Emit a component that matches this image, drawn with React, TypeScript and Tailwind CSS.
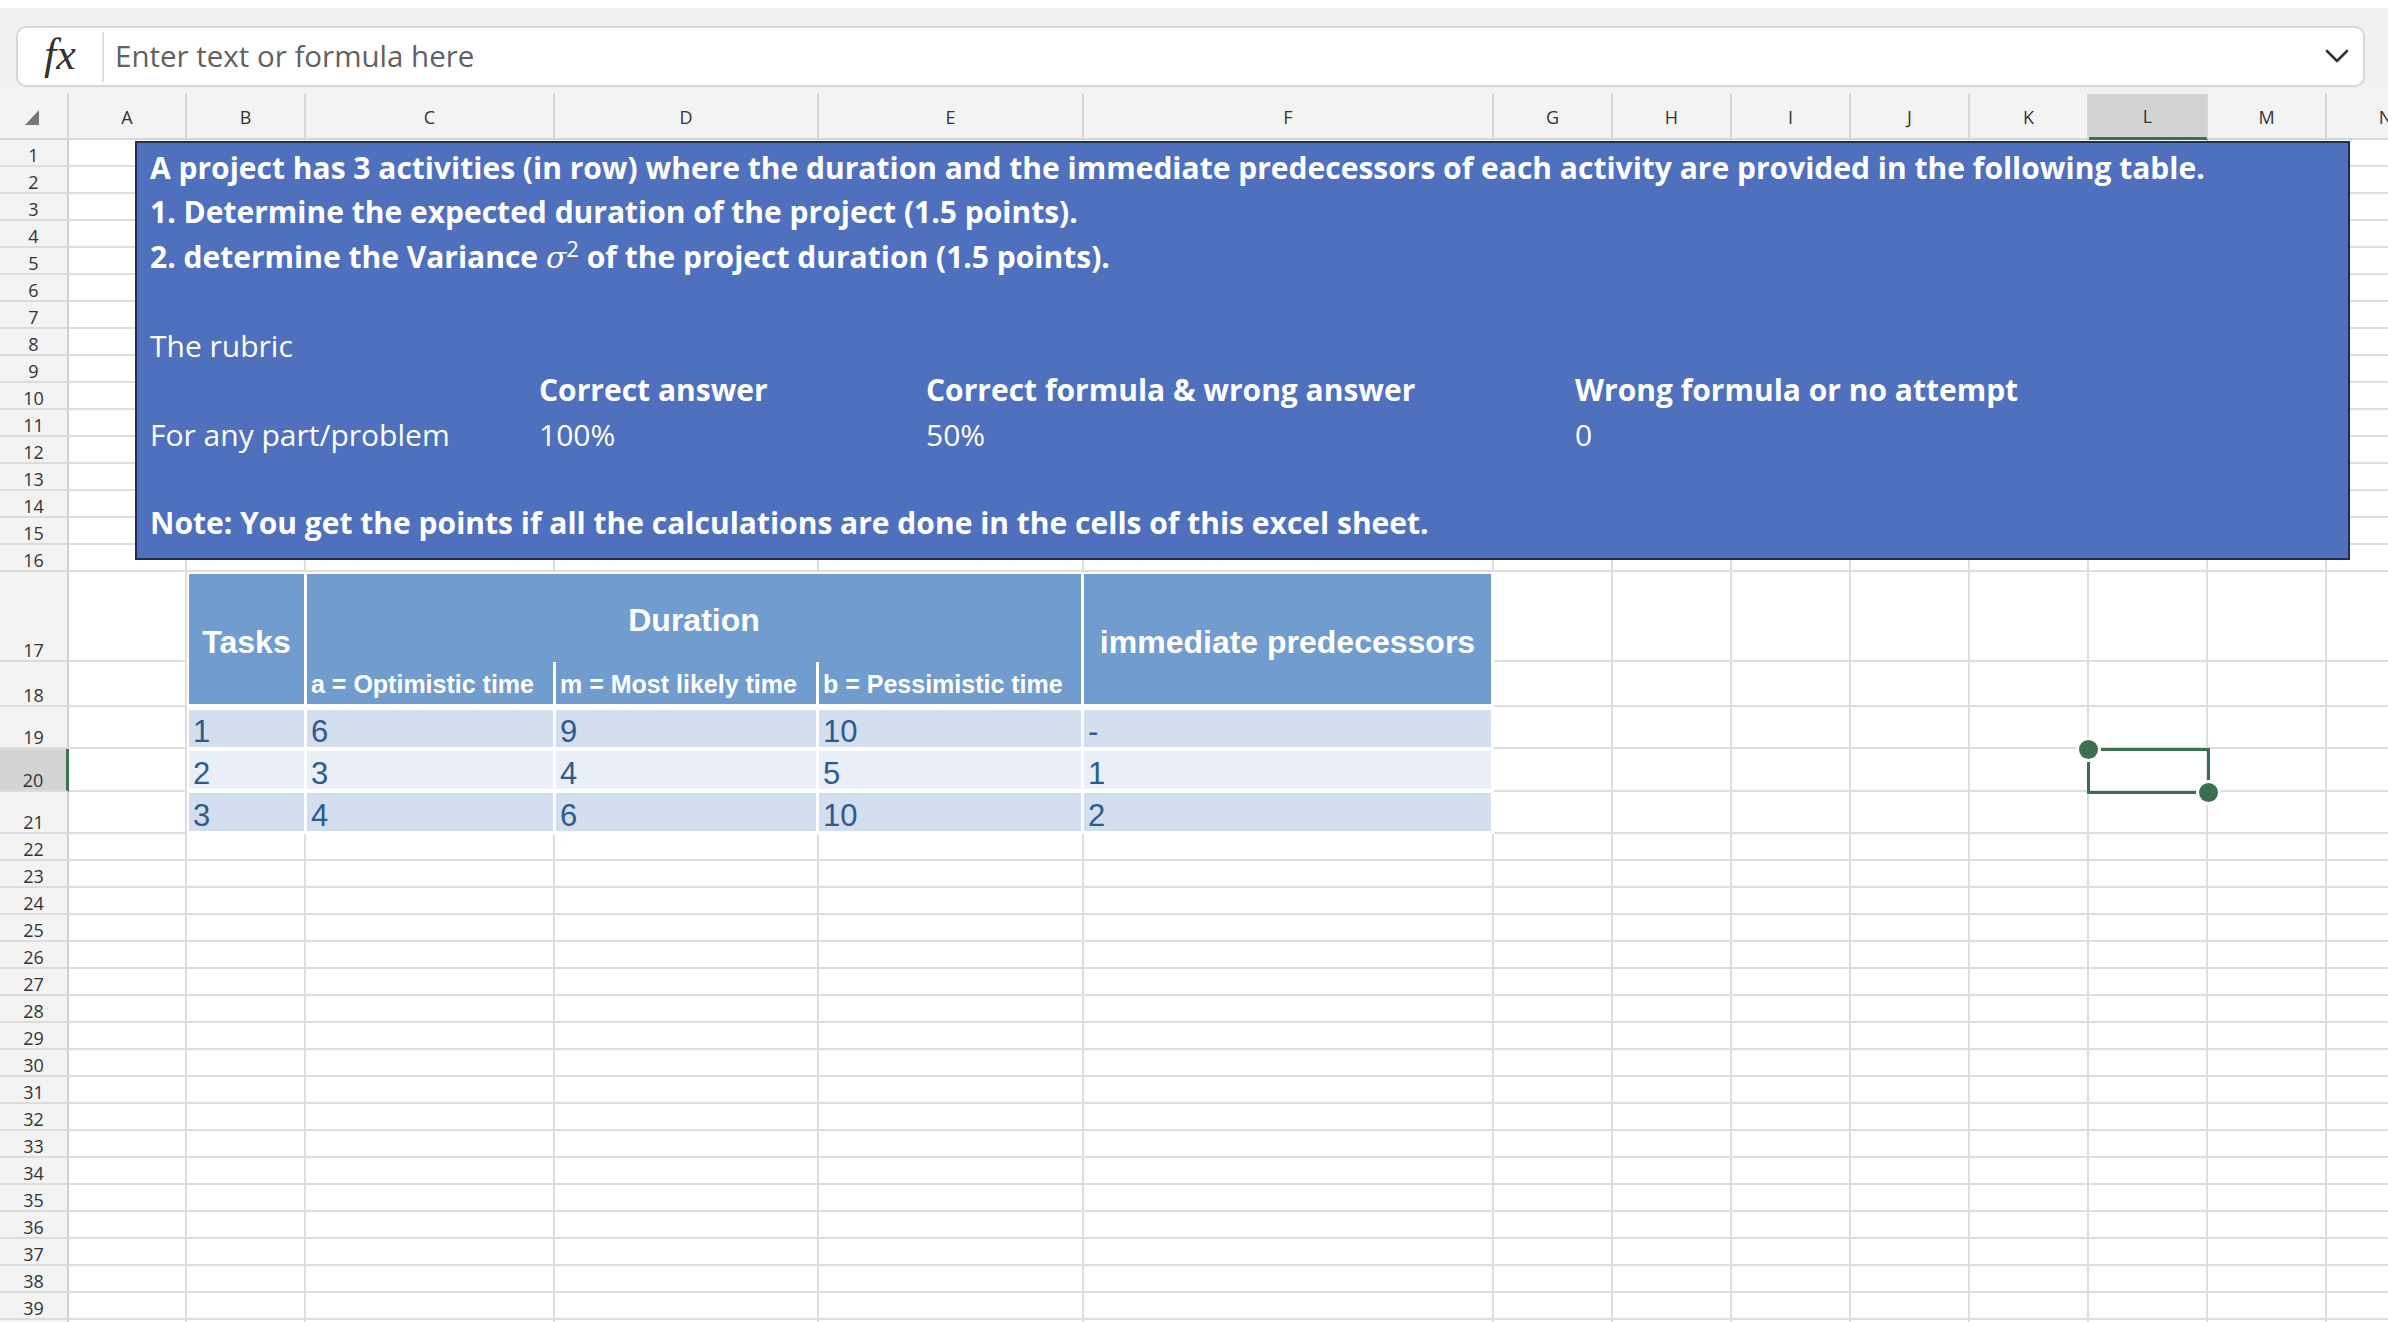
import React from "react";

type Col = { label: string; w: string };

const COLS: Col[] = [
  { label: "A", w: "w-[118px]" },
  { label: "B", w: "w-[119px]" },
  { label: "C", w: "w-[249px]" },
  { label: "D", w: "w-[264px]" },
  { label: "E", w: "w-[265px]" },
  { label: "F", w: "w-[410px]" },
  { label: "G", w: "w-[119px]" },
  { label: "H", w: "w-[119px]" },
  { label: "I", w: "w-[119px]" },
  { label: "J", w: "w-[119px]" },
  { label: "K", w: "w-[119px]" },
  { label: "L", w: "w-[119px]" },
  { label: "M", w: "w-[119px]" },
  { label: "N", w: "w-[119px]" },
];

type RowDef = { n: number; h: string; selected?: boolean };

const TOP_ROWS: RowDef[] = Array.from({ length: 16 }, (_, i) => ({ n: i + 1, h: "h-[27px]" }));
const TABLE_ROWS: RowDef[] = [
  { n: 17, h: "h-[90px]" },
  { n: 18, h: "h-[45px]" },
  { n: 19, h: "h-[42px]" },
  { n: 20, h: "h-[43px]", selected: true },
  { n: 21, h: "h-[42px]" },
];
const BOTTOM_ROWS: RowDef[] = Array.from({ length: 19 }, (_, i) => ({ n: i + 22, h: "h-[27px]" }));

const TASKS = [
  { id: "1", a: "6", m: "9", b: "10", pred: "-", bg: "bg-[#d3deef]" },
  { id: "2", a: "3", m: "4", b: "5", pred: "1", bg: "bg-[#e9eef7]" },
  { id: "3", a: "4", m: "6", b: "10", pred: "2", bg: "bg-[#d3deef]" },
];

function Cell({ w }: { w: string }) {
  return <div className={`${w} shrink-0 h-full border-r-2 border-b-2 border-[#dddddd]`} />;
}

function RowHead({ row }: { row: RowDef }) {
  return (
    <div
      className={`w-[69px] shrink-0 h-full flex items-end justify-center border-b-2 border-b-[#dcdcdc] text-[18px] leading-[20px] text-[#333333] ${
        row.selected
          ? "bg-[#d4d4d4] border-r-[3px] border-r-[#3a7050]"
          : "bg-[#f3f3f3] border-r-2 border-r-[#d0d0d0]"
      }`}
    >
      {row.n}
    </div>
  );
}

function GridRow({ row }: { row: RowDef }) {
  return (
    <div className={`flex ${row.h}`}>
      <RowHead row={row} />
      {COLS.map((c) => (
        <Cell key={c.label} w={c.w} />
      ))}
    </div>
  );
}

function FormulaBar() {
  return (
    <div className="h-[94px] bg-[#f1f1f1] border-t-[8px] border-white pt-[18px] pl-[16px] pr-[23px]">
      <div className="h-[61px] bg-white border-2 border-[#d7d7d7] rounded-[10px] flex items-center">
        <div className="w-[84px] flex justify-center font-['Liberation_Serif',serif] italic text-[44px] leading-none text-[#333333] pb-[4px]">
          fx
        </div>
        <div className="w-[2px] h-[50px] bg-[#dedede]" />
        <div className="flex-1 pl-[11px] text-[29.5px] text-[#616161]">Enter text or formula here</div>
        <svg width="24" height="15" viewBox="0 0 24 15" className="mr-[14px]">
          <polyline points="2,2 12,12 22,2" fill="none" stroke="#333333" strokeWidth="2.6" strokeLinecap="round" strokeLinejoin="round" />
        </svg>
      </div>
    </div>
  );
}

function ColumnHeaders() {
  return (
    <div className="flex h-[46px] bg-[#f3f3f3]">
      <div className="w-[69px] shrink-0 h-full border-r-2 border-b-2 border-[#d6d6d6] flex items-end justify-end pr-[28px] pb-[13px]">
        <svg width="14" height="15" viewBox="0 0 14 15">
          <polygon points="14,0 14,15 0,15" fill="#767676" />
        </svg>
      </div>
      {COLS.map((c) =>
        c.label === "L" ? (
          <div
            key={c.label}
            className={`${c.w} shrink-0 h-full bg-[#d3d3d3] border-r-2 border-r-[#d6d6d6] border-b-[3px] border-b-[#3a7050] flex items-center justify-center pt-[2px] text-[18px] text-[#333333]`}
          >
            {c.label}
          </div>
        ) : (
          <div
            key={c.label}
            className={`${c.w} shrink-0 h-full border-r-2 border-b-2 border-[#d6d6d6] flex items-center justify-center pt-[2px] text-[18px] text-[#333333]`}
          >
            {c.label}
          </div>
        )
      )}
    </div>
  );
}

function ActivityTable() {
  return (
    <div className="w-[1307px] h-[262px] shrink-0 bg-white pt-[2px] pl-[2px] flex flex-col font-['Liberation_Sans',Arial,sans-serif]">
      <div className="flex gap-[3px] h-[130px] text-white font-bold">
        <div className="w-[115px] bg-[#709dcd] flex items-center justify-center pt-[6px] text-[32px]">Tasks</div>
        <div className="w-[774px] bg-[#709dcd] flex flex-col">
          <div className="flex-1 flex items-center justify-center pt-[3px] text-[32px]">Duration</div>
          <div className="h-[42px] flex text-[25px] leading-normal">
            <div className="w-[246px] flex items-end pl-[4px] pb-[1px] whitespace-nowrap">a = Optimistic time</div>
            <div className="w-[263px] flex items-end pl-[4px] pb-[1px] border-l-[3px] border-white whitespace-nowrap">
              m = Most likely time
            </div>
            <div className="w-[265px] flex items-end pl-[4px] pb-[1px] border-l-[3px] border-white whitespace-nowrap">
              b = Pessimistic time
            </div>
          </div>
        </div>
        <div className="w-[407px] bg-[#709dcd] flex items-center justify-center pt-[6px] text-[32px]">
          immediate predecessors
        </div>
      </div>
      <div className="flex flex-col gap-[4px] mt-[6px] text-[31px] leading-[31px] text-[#2d5b8b]">
        {TASKS.map((t, i) => (
          <div key={t.id} className={`flex gap-[3px] ${i === 0 ? "h-[37px]" : "h-[38px]"}`}>
            <div className={`w-[115px] ${t.bg} flex items-end pl-[4px]`}>{t.id}</div>
            <div className={`w-[246px] ${t.bg} flex items-end pl-[4px]`}>{t.a}</div>
            <div className={`w-[260px] ${t.bg} flex items-end pl-[4px]`}>{t.m}</div>
            <div className={`w-[262px] ${t.bg} flex items-end pl-[4px]`}>{t.b}</div>
            <div className={`w-[407px] ${t.bg} flex items-end pl-[4px]`}>{t.pred}</div>
          </div>
        ))}
      </div>
    </div>
  );
}

function TableBand() {
  return (
    <div className="flex">
      <div className="flex flex-col">
        {TABLE_ROWS.map((r) => (
          <div key={r.n} className={`flex ${r.h}`}>
            <RowHead row={r} />
            <Cell w="w-[118px]" />
          </div>
        ))}
      </div>
      <ActivityTable />
      <div className="flex flex-col">
        {TABLE_ROWS.map((r) => (
          <div key={r.n} className={`flex ${r.h}`}>
            {COLS.slice(6).map((c) => (
              <Cell key={c.label} w={c.w} />
            ))}
          </div>
        ))}
      </div>
    </div>
  );
}

function ProblemBox() {
  return (
    <div className="absolute left-[135px] top-[1px] w-[2215px] h-[419px] bg-[#4f71bd] border-2 border-[#1f2f52] pl-[13px] pt-[3px] text-white font-['Open_Sans',sans-serif] text-[30px] leading-[44.3px]">
      <div className="font-bold whitespace-nowrap">
        A project has 3 activities (in row) where the duration and the immediate predecessors of each activity are provided in the following table.
      </div>
      <div className="font-bold">1. Determine the expected duration of the project (1.5 points).</div>
      <div className="font-bold">
        2. determine the Variance{" "}
        <span className="font-['DejaVu_Serif',serif] italic font-normal">σ</span>
        <sup className="font-normal text-[22px]">2</sup> of the project duration (1.5 points).
      </div>
      <div className="h-[44.3px]" />
      <div>The rubric</div>
      <div className="flex font-bold">
        <div className="w-[389px]" />
        <div className="w-[387px]">Correct answer</div>
        <div className="w-[649px]">Correct formula &amp; wrong answer</div>
        <div>Wrong formula or no attempt</div>
      </div>
      <div className="flex">
        <div className="w-[389px]">For any part/problem</div>
        <div className="w-[387px]">100%</div>
        <div className="w-[649px]">50%</div>
        <div>0</div>
      </div>
      <div className="h-[44.3px]" />
      <div className="font-bold">Note: You get the points if all the calculations are done in the cells of this excel sheet.</div>
    </div>
  );
}

function Selection() {
  return (
    <div className="absolute left-[2087px] top-[608px] w-[123px] h-[46px] border-[3px] border-[#3a7050]">
      <div className="absolute -left-[11px] -top-[11px] w-[19px] h-[19px] rounded-full bg-[#3a7050] ring-[3px] ring-white" />
      <div className="absolute -right-[11px] -bottom-[11px] w-[19px] h-[19px] rounded-full bg-[#3a7050] ring-[3px] ring-white" />
    </div>
  );
}

export default function App() {
  return (
    <div className="w-[2388px] h-[1322px] overflow-hidden bg-white font-['Open_Sans',sans-serif]">
      <FormulaBar />
      <ColumnHeaders />
      <div className="relative">
        {TOP_ROWS.map((r) => (
          <GridRow key={r.n} row={r} />
        ))}
        <TableBand />
        {BOTTOM_ROWS.map((r) => (
          <GridRow key={r.n} row={r} />
        ))}
        <ProblemBox />
        <Selection />
      </div>
    </div>
  );
}
